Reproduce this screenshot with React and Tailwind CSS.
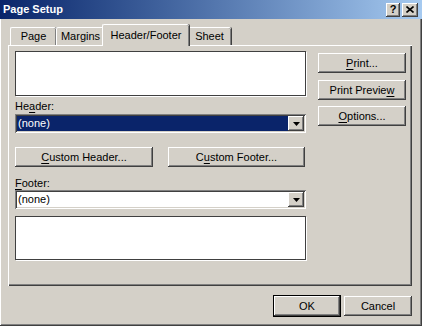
import React from 'react';

const raised =
  'bg-[#d4d0c8] shadow-[inset_-1px_-1px_#404040,inset_1px_1px_#ffffff,inset_-2px_-2px_#808080,inset_2px_2px_#d4d0c8]';
const sunken =
  'shadow-[inset_1px_1px_#808080,inset_-1px_-1px_#ffffff,inset_2px_2px_#404040,inset_-2px_-2px_#d4d0c8]';

const U = ({ children }) => <span className="underline underline-offset-[2px]">{children}</span>;

const Button = ({ className = '', children }) => (
  <div className={`flex h-[20px] items-center justify-center text-black ${raised} ${className}`}>{children}</div>
);

const Combo = ({ selected }) => (
  <div className={`flex h-[19px] items-center bg-white p-[2px] ${sunken}`}>
    <div className={`flex h-full flex-1 items-center pl-[1px] ${selected ? 'bg-[#0a246a] text-white' : 'text-black'}`}>
      (none)
    </div>
    <div className={`flex h-full w-[16px] items-center justify-center ${raised}`}>
      <svg width="7" height="4" viewBox="0 0 7 4">
        <path d="M0 0h7L3.5 4z" fill="#000" />
      </svg>
    </div>
  </div>
);

const Preview = ({ h }) => (
  <div className={`${h} border border-[#404040] bg-white shadow-[1px_1px_0_#ffffff]`} />
);

const Tab = ({ active, w, children }) => (
  <div
    className={`flex items-center justify-center rounded-t-[2px] border-l border-t border-l-white border-t-white shadow-[inset_-1px_0_#808080,1px_0_#404040] ${w} ${
      active ? 'z-10 -mx-[2px] -mb-px h-[22px] bg-[#d4d0c8]' : 'h-[18px]'
    }`}
  >
    {children}
  </div>
);

export default function App() {
  return (
    <div
      className="flex h-[326px] w-[422px] flex-col bg-[#d4d0c8] text-[11px] leading-[13px] text-black shadow-[inset_-1px_-1px_#404040,inset_1px_0_#ffffff,inset_-2px_-2px_#808080]"
      style={{ fontFamily: '"Liberation Sans", Arial, sans-serif' }}
    >
      <div className="flex h-[19px] items-center justify-between bg-gradient-to-r from-[#0a246a] to-[#a6caf0] pl-[3px] pr-[4px]">
        <span className="font-bold text-white">Page Setup</span>
        <div className="flex items-center gap-[2px]">
          <div className={`flex h-[14px] w-[14px] items-center justify-center text-[11px] font-bold ${raised}`}>?</div>
          <div className={`flex h-[14px] w-[16px] items-center justify-center ${raised}`}>
            <svg width="8" height="7" viewBox="0 0 8 7">
              <path d="M0.5 0.5l7 6M7.5 0.5l-7 6" stroke="#000" strokeWidth="1.6" />
            </svg>
          </div>
        </div>
      </div>

      <div className="flex h-[26px] items-end pl-[10px]">
        <Tab w="w-[46px]">Page</Tab>
        <Tab w="w-[48px]">Margins</Tab>
        <Tab active w="w-[87px]">Header/Footer</Tab>
        <Tab w="w-[44px]">Sheet</Tab>
      </div>

      <div className="ml-[8px] flex h-[241px] w-[404px] gap-[12px] pl-[7px] pt-[6px] shadow-[inset_1px_1px_#ffffff,inset_-1px_-1px_#404040,inset_-2px_-2px_#808080]">
        <div className="flex w-[291px] flex-col">
          <Preview h="h-[45px]" />
          <div className="mt-[4px]">
            He<U>a</U>der:
          </div>
          <div className="mt-[1px]">
            <Combo selected />
          </div>
          <div className="mt-[14px] flex justify-between pr-[1px]">
            <Button className="w-[138px]">
              <U>C</U>ustom Header...
            </Button>
            <Button className="w-[137px]">
              C<U>u</U>stom Footer...
            </Button>
          </div>
          <div className="mt-[10px]">
            <U>F</U>ooter:
          </div>
          <Combo />
          <div className="mt-[7px]">
            <Preview h="h-[44px]" />
          </div>
        </div>
        <div className="flex w-[88px] flex-col pt-[2px]">
          <Button>
            <U>P</U>rint...
          </Button>
          <Button className="mt-[7px]">
            Print Previe<U>w</U>
          </Button>
          <Button className="mt-[6px]">
            <U>O</U>ptions...
          </Button>
        </div>
      </div>

      <div className="mt-[10px] flex justify-end gap-[4px] pr-[10px]">
        <Button className="w-[66px] outline outline-1 outline-black">OK</Button>
        <Button className="w-[68px]">Cancel</Button>
      </div>
    </div>
  );
}
